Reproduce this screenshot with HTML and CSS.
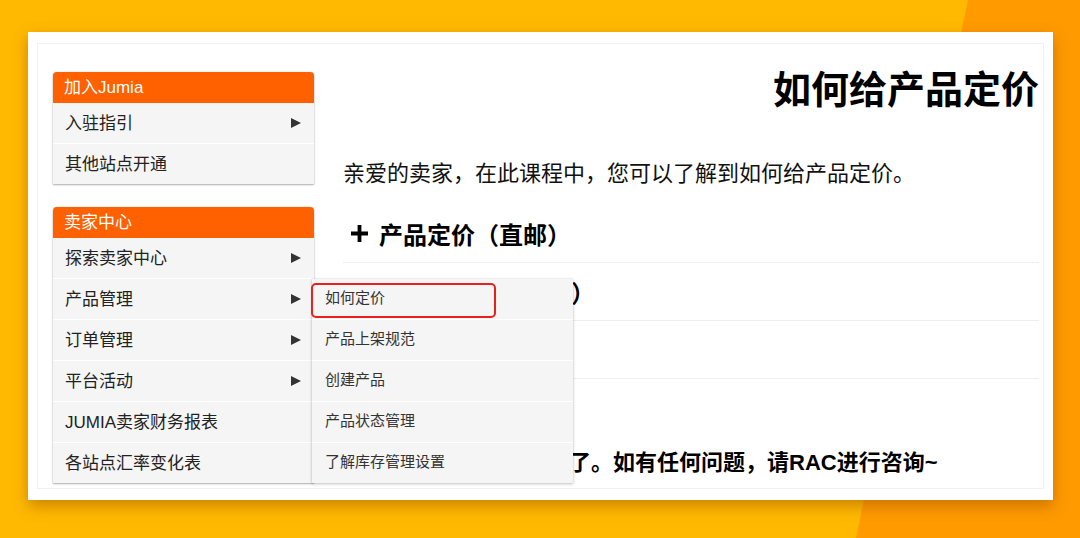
FILE: index.html
```html
<!DOCTYPE html>
<html lang="zh-CN">
<head>
<meta charset="utf-8">
<title>如何给产品定价</title>
<link rel="stylesheet" href="styles.css">
</head>
<body>
<div class="card">
  <div class="frame">
    <aside class="sidebar">
      <div class="menu">
        <div class="menu-head">加入Jumia</div>
        <div class="menu-item">入驻指引<span class="arrow"></span></div>
        <div class="menu-item">其他站点开通</div>
      </div>
      <div class="menu">
        <div class="menu-head">卖家中心</div>
        <div class="menu-item">探索卖家中心<span class="arrow"></span></div>
        <div class="menu-item">产品管理<span class="arrow"></span>
          <div class="submenu">
            <div class="sub-item">如何定价<span class="highlight"></span></div>
            <div class="sub-item">产品上架规范</div>
            <div class="sub-item">创建产品</div>
            <div class="sub-item">产品状态管理</div>
            <div class="sub-item">了解库存管理设置</div>
          </div>
        </div>
        <div class="menu-item">订单管理<span class="arrow"></span></div>
        <div class="menu-item">平台活动<span class="arrow"></span></div>
        <div class="menu-item">JUMIA卖家财务报表</div>
        <div class="menu-item">各站点汇率变化表</div>
      </div>
    </aside>
    <main class="content">
      <h1 class="title">如何给产品定价</h1>
      <p class="intro">亲爱的卖家，在此课程中，您可以了解到如何给产品定价。</p>
      <div class="section"><svg class="plus" viewBox="0 0 18 18"><path d="M7 0h4v7h7v4h-7v7H7v-7H0V7h7z"/></svg>产品定价（直邮）</div>
      <div class="section"><svg class="plus" viewBox="0 0 18 18"><path d="M7 0h4v7h7v4h-7v7H7v-7H0V7h7z"/></svg>产品定价（海外仓）</div>
      <div class="section"><svg class="plus" viewBox="0 0 18 18"><path d="M7 0h4v7h7v4h-7v7H7v-7H0V7h7z"/></svg>价格调整</div>
      <p class="outro">您已学完产品定价课程了。如有任何问题，请RAC进行咨询~</p>
    </main>
  </div>
</div>
</body>
</html>
```

FILE: styles.css
```css
html, body {
  margin: 0;
  padding: 0;
}

body {
  width: 1080px;
  height: 538px;
  overflow: hidden;
  position: relative;
  background: #ffb900;
  font-family: "Liberation Sans", "Noto Sans CJK SC", sans-serif;
}

body::before {
  content: "";
  position: absolute;
  inset: 0;
  background: #ff9a00;
  clip-path: polygon(968px 0, 1080px 0, 1080px 538px, 856px 538px);
}

.card {
  position: relative;
  z-index: 1;
  margin: 32px 0 0 28px;
  width: 1025px;
  height: 468px;
  box-sizing: border-box;
  padding: 11px 9px;
  background: #fff;
  box-shadow: 0 6px 14px rgba(140, 70, 0, 0.45);
}

.frame {
  height: 100%;
  box-sizing: border-box;
  border: 1px solid #f1f1f1;
  display: flex;
}

/* ---------- sidebar ---------- */
.sidebar {
  width: 261px;
  flex: none;
  margin: 28px 0 0 15px;
  position: relative;
  z-index: 2;
}

.menu {
  background: #f5f5f5;
  border-radius: 4px 4px 0 0;
  box-shadow: 0 1px 2px rgba(0, 0, 0, 0.3), 0 0 1px rgba(0, 0, 0, 0.35);
}

.menu + .menu {
  margin-top: 23px;
}

.menu-head {
  height: 31px;
  line-height: 31px;
  padding-left: 11px;
  background: #ff6000;
  color: #fff;
  font-size: 17px;
  border-radius: 4px 4px 0 0;
}

.menu-item {
  position: relative;
  height: 40px;
  box-sizing: border-box;
  display: flex;
  align-items: center;
  justify-content: space-between;
  padding: 0 13px 4px 12px;
  font-size: 17px;
  color: #222;
}

.menu-item + .menu-item {
  height: 41px;
  border-top: 1px solid #fff;
}

.arrow {
  width: 0;
  height: 0;
  margin-top: 4px;
  border-left: 10px solid #333;
  border-top: 5px solid transparent;
  border-bottom: 5px solid transparent;
}

.submenu {
  position: absolute;
  left: 259px;
  top: 0;
  width: 261px;
  background: #f5f5f5;
  box-shadow: 0 1px 3px rgba(0, 0, 0, 0.22), 0 0 1px rgba(0, 0, 0, 0.2);
  z-index: 5;
}

.sub-item {
  position: relative;
  height: 40px;
  box-sizing: border-box;
  display: flex;
  align-items: center;
  padding: 0 0 5px 13px;
  font-size: 15px;
  color: #333;
}

.sub-item + .sub-item {
  height: 41px;
  border-top: 1px solid #fff;
}

.highlight {
  position: absolute;
  left: -1px;
  top: 4px;
  width: 185px;
  height: 35px;
  box-sizing: border-box;
  border: 2px solid #e8201e;
  border-radius: 5px;
}

/* ---------- content ---------- */
.content {
  flex: 1;
  margin-left: 29px;
  padding-right: 4px;
  color: #111;
}

.title {
  margin: 23px 0 0;
  text-align: right;
  font-size: 38px;
  line-height: 46px;
  font-weight: bold;
  color: #000;
}

.intro {
  margin: 46px 0 0;
  font-size: 22px;
  line-height: 30px;
}

.section {
  height: 57px;
  border-bottom: 1px solid #eee;
  display: flex;
  align-items: center;
  padding-left: 8px;
  font-size: 24px;
  font-weight: bold;
  color: #000;
}

.intro + .section {
  margin-top: 16px;
}

.plus {
  width: 17px;
  height: 17px;
  margin-right: 11px;
  fill: #000;
}

.outro {
  margin: 69px 0 0;
  padding-left: 6px;
  font-size: 22px;
  line-height: 30px;
  font-weight: bold;
  color: #000;
}
```
